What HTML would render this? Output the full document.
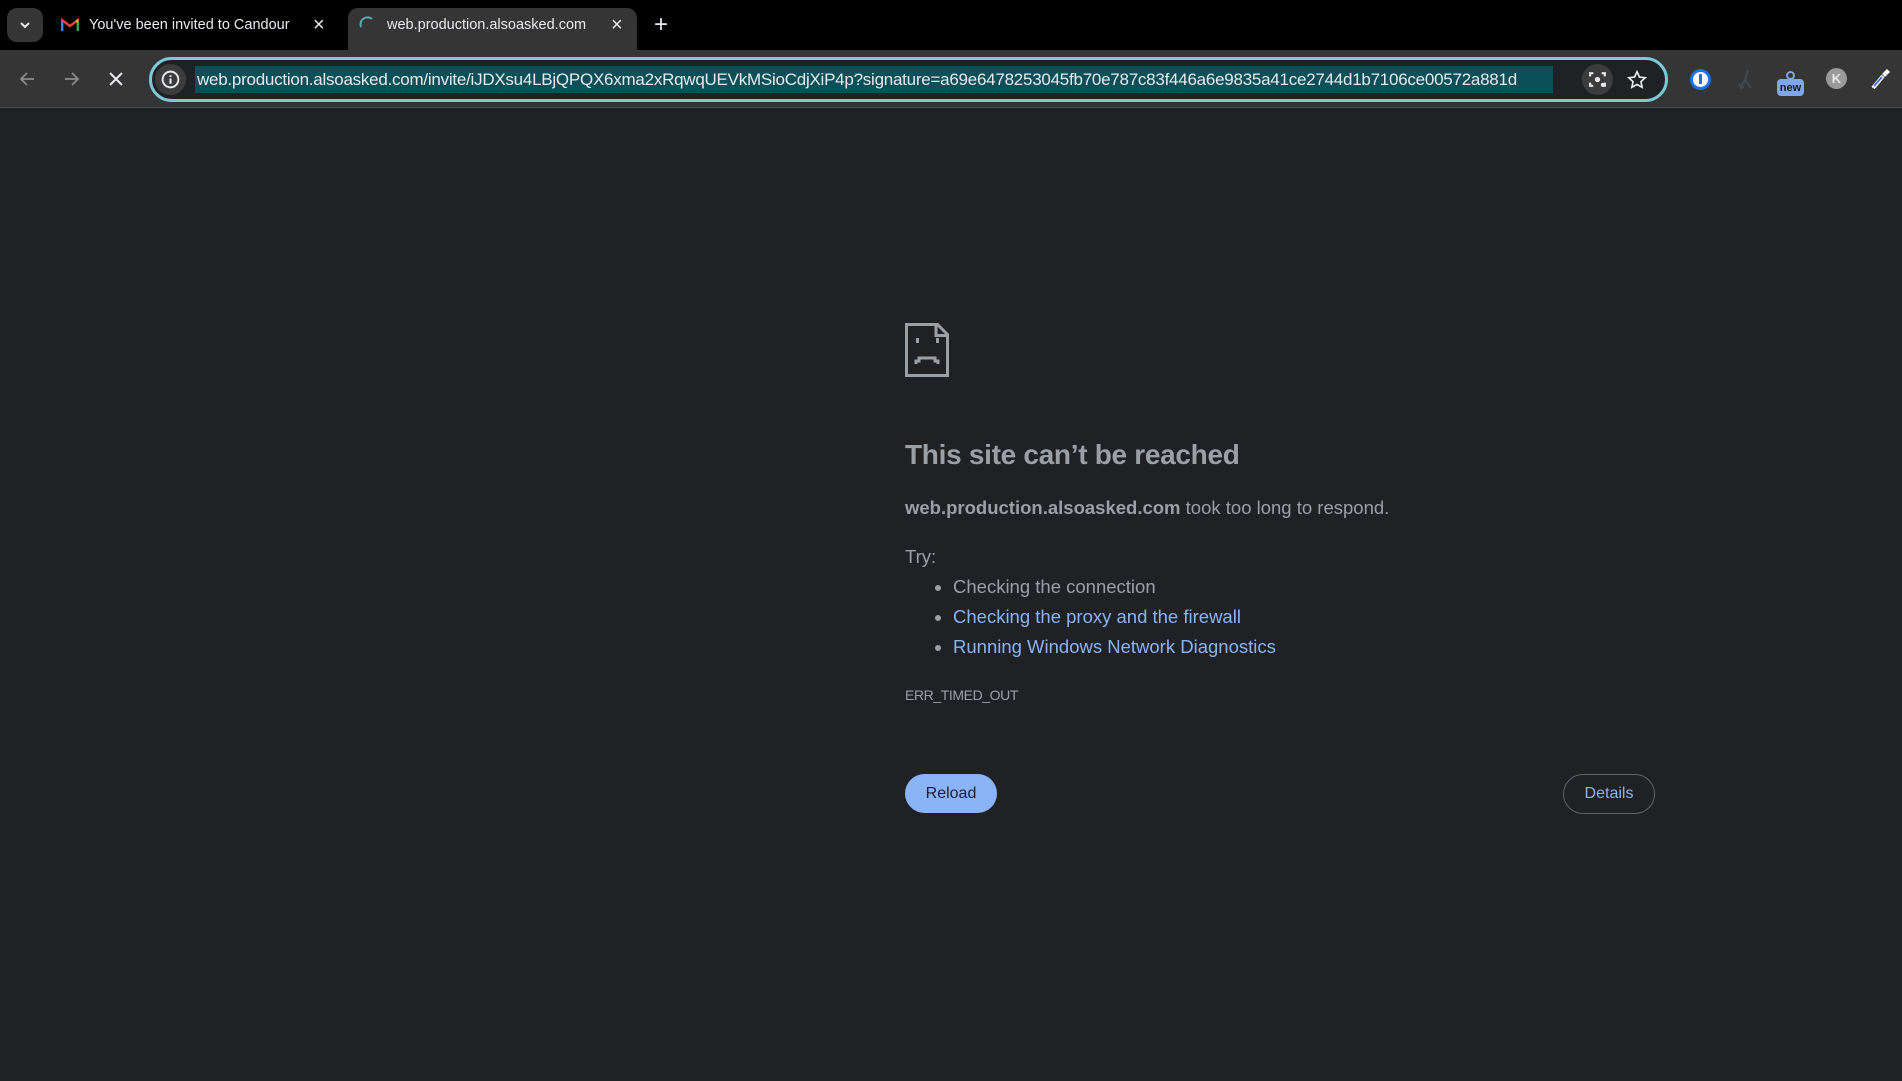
<!DOCTYPE html>
<html><head><meta charset="utf-8"><style>
*{margin:0;padding:0;box-sizing:border-box}
body{width:1902px;height:1081px;background:#202124;font-family:"Liberation Sans",sans-serif;position:relative;overflow:hidden}
.abs{position:absolute}
#tabs{left:0;top:0;width:1902px;height:50px;background:#000}
#tb{left:0;top:50px;width:1902px;height:58px;background:#353535;border-bottom:1px solid #4a4a4a}
.t{color:#e8eaed;font-size:14.5px;white-space:nowrap}
.c{color:#9aa0a6}
ul{list-style:none}
</style></head><body>
<div id="tabs" class="abs">
 <div class="abs" style="left:7px;top:8px;width:36px;height:34px;background:#353535;border-radius:10px"></div>
 <svg class="abs" style="left:19px;top:19px" width="12" height="12" viewBox="0 0 12 12"><path d="M2 4l4 4 4-4" stroke="#e8eaed" stroke-width="2" fill="none"/></svg>
 <svg class="abs" style="left:61px;top:18px" width="18" height="14" viewBox="0 0 18 14"><path d="M1 13V2l8 6 8-6v11" stroke="#ea4335" stroke-width="2.4" fill="none"/><path d="M1 13V3" stroke="#4285f4" stroke-width="2.6"/><path d="M17 13V3" stroke="#34a853" stroke-width="2.6"/><path d="M15 3l2 0" stroke="#fbbc04" stroke-width="2.6"/></svg>
 <div class="abs t" style="left:89px;top:17px;width:208px;overflow:hidden">You've been invited to Candour</div>
 <div class="abs t" style="left:313px;top:14px;font-size:20px">×</div>
 <div class="abs" style="left:348px;top:8px;width:289px;height:42px;background:#353535;border-radius:10px 10px 0 0"></div>
 <svg class="abs" style="left:358px;top:15px" width="20" height="20" viewBox="0 0 20 20"><path d="M3 12A7 7 0 0 1 14 4" stroke="#5ea8a8" stroke-width="2" fill="none"/></svg>
 <div class="abs t" style="left:387px;top:17px">web.production.alsoasked.com</div>
 <div class="abs t" style="left:611px;top:14px;font-size:20px">×</div>
 <div class="abs t" style="left:654px;top:11px;font-size:24px">+</div>
</div>
<div id="tb" class="abs">
 <svg class="abs" style="left:17px;top:19px" width="20" height="20" viewBox="0 0 20 20"><path d="M17 10H4M10 4l-6 6 6 6" stroke="#8a8a8a" stroke-width="1.8" fill="none"/></svg>
 <svg class="abs" style="left:62px;top:19px" width="20" height="20" viewBox="0 0 20 20"><path d="M3 10h13M10 4l6 6-6 6" stroke="#8a8a8a" stroke-width="1.8" fill="none"/></svg>
 <svg class="abs" style="left:107px;top:20px" width="18" height="18" viewBox="0 0 18 18"><path d="M3 3l12 12M15 3L3 15" stroke="#e8eaed" stroke-width="2"/></svg>
 <div class="abs" style="left:149px;top:7px;width:1519px;height:45px;border:3px solid #7bc8d6;border-radius:23px;background:#202124"></div>
 <div class="abs" style="left:155px;top:14px;width:31px;height:31px;border-radius:50%;background:#3c3c3c"></div>
 <svg class="abs" style="left:160px;top:19px" width="21" height="21" viewBox="0 0 20 20"><circle cx="10" cy="10" r="7.5" stroke="#e8eaed" stroke-width="1.8" fill="none"/><path d="M10 9v5M10 6v1.5" stroke="#e8eaed" stroke-width="2"/></svg>
 <div class="abs t" style="left:195px;top:16px;height:27px;line-height:27px;background:#0b4f58;font-size:17px;padding:0 2px;width:1358px;overflow:hidden;letter-spacing:-0.25px">web.production.alsoasked.com/invite/iJDXsu4LBjQPQX6xma2xRqwqUEVkMSioCdjXiP4p?signature=a69e6478253045fb70e787c83f446a6e9835a41ce2744d1b7106ce00572a881d</div>
 <div class="abs" style="left:1582px;top:14px;width:31px;height:31px;border-radius:50%;background:#3c3c3c"></div>
 <svg class="abs" style="left:1587px;top:19px" width="21" height="21" viewBox="0 0 20 20"><path d="M3 7V4h3M14 4h3v3M17 13v3h-3M6 16H3v-3" stroke="#e8eaed" stroke-width="2" fill="none"/><circle cx="10" cy="10" r="2.5" fill="#e8eaed"/><circle cx="15" cy="15" r="1.8" fill="#e8eaed"/></svg>
 <svg class="abs" style="left:1626px;top:19px" width="22" height="22" viewBox="0 0 24 24"><path d="M12 3l2.7 5.8 6.3.7-4.7 4.3 1.3 6.2L12 16.9 6.4 20l1.3-6.2L3 9.5l6.3-.7z" stroke="#e8eaed" stroke-width="1.8" fill="none"/></svg>
 <div class="abs" style="left:1690px;top:19px;width:21px;height:21px;border-radius:50%;background:#fff;border:3px solid #1a73e8"></div>
 <div class="abs" style="left:1699px;top:24px;width:3px;height:10px;background:#1a73e8"></div>
 <svg class="abs" style="left:1736px;top:18px" width="20" height="24" viewBox="0 0 20 24"><path d="M12 2L9 12l-4 6M9 12l6 8M3 16l2 4 3-1" stroke="#3d4b55" stroke-width="2" fill="none"/></svg>
 <div class="abs" style="left:1777px;top:29px;width:27px;height:17px;border-radius:4px;background:#7ea6e8;color:#1a1a1a;font-size:11px;font-weight:bold;text-align:center;line-height:18px">new</div>
 <div class="abs" style="left:1786px;top:21px;width:9px;height:9px;border:2px solid #7ea6e8;border-radius:50%"></div>
 <div class="abs" style="left:1826px;top:18px;width:21px;height:21px;border-radius:50%;background:#9a9a9a;color:#e8e8e8;font-size:13px;font-weight:bold;text-align:center;line-height:21px">K</div>
 <svg class="abs" style="left:1869px;top:17px" width="22" height="24" viewBox="0 0 22 24"><path d="M4 21l10-12" stroke="#fff" stroke-width="4"/><path d="M5 19l8-9" stroke="#3b6fd6" stroke-width="1.8"/><path d="M13 7l5-5 3 3-5 5z" fill="#fff"/></svg>
</div>
<svg class="abs" style="left:905px;top:323px" width="44" height="54" viewBox="0 0 44 54"><path d="M1.5 1.5h31l10 10v41h-41z" stroke="#9aa0a6" stroke-width="3" fill="none"/><path d="M31 1.5v11h11" stroke="#9aa0a6" stroke-width="3" fill="none"/><rect x="11" y="15" width="3" height="5" fill="#9aa0a6"/><rect x="31" y="15" width="3" height="5" fill="#9aa0a6"/><path d="M11 41v-3h3v-3h16v3h3v3" stroke="#9aa0a6" stroke-width="3" fill="none"/></svg>
<div class="abs c" style="left:905px;top:439px;font-size:28px;font-weight:bold;letter-spacing:-0.3px">This site can’t be reached</div>
<div class="abs c" style="left:905px;top:497px;font-size:18.5px"><b>web.production.alsoasked.com</b> took too long to respond.</div>
<div class="abs c" style="left:905px;top:546px;font-size:18.5px">Try:</div>
<ul class="abs c" style="left:935px;top:572px;font-size:18.5px;line-height:30px">
<li><span style="display:inline-block;width:6px;height:6px;border-radius:50%;background:#9aa0a6;margin-right:12px;vertical-align:middle"></span>Checking the connection</li>
<li style="color:#8ab4f8"><span style="display:inline-block;width:6px;height:6px;border-radius:50%;background:#9aa0a6;margin-right:12px;vertical-align:middle"></span>Checking the proxy and the firewall</li>
<li style="color:#8ab4f8"><span style="display:inline-block;width:6px;height:6px;border-radius:50%;background:#9aa0a6;margin-right:12px;vertical-align:middle"></span>Running Windows Network Diagnostics</li>
</ul>
<div class="abs c" style="left:905px;top:687px;font-size:14px;letter-spacing:-0.4px">ERR_TIMED_OUT</div>
<div class="abs" style="left:905px;top:774px;width:92px;height:39px;border-radius:20px;background:#8ab4f8;color:#202124;font-size:16px;text-align:center;line-height:39px">Reload</div>
<div class="abs" style="left:1563px;top:774px;width:92px;height:40px;border-radius:20px;border:1px solid #5f6368;color:#8ab4f8;font-size:16px;text-align:center;line-height:38px">Details</div>
</body></html>
